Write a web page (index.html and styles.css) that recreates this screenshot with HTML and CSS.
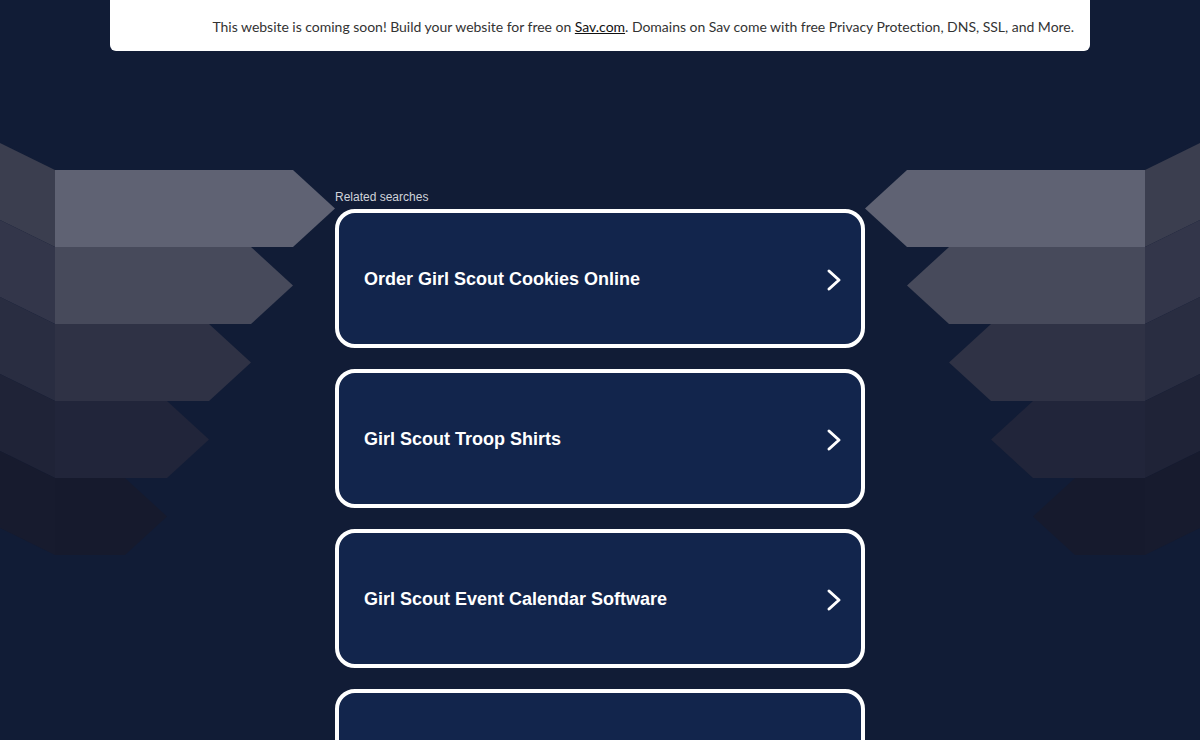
FILE: index.html
```html
<!DOCTYPE html>
<html lang="en">
<head>
  <meta charset="utf-8" />
  <title>Coming soon</title>
  <meta name="viewport" content="width=device-width, initial-scale=1.0">
  <link rel="stylesheet" href="styles.css">
</head>
<body>
  <div class="notice">
    <p>This website is coming soon! Build your website for free on <a href="#">Sav.com</a>. Domains on Sav come with free Privacy Protection, DNS, SSL, and More.</p>
  </div>

  <div class="stage">
    <svg class="decor" width="335" height="430" viewBox="0 0 335 430" aria-hidden="true">
      <polygon fill="#3b3e4f" points="0,0 55,27 55,104 0,77" />
      <polygon fill="#33364a" points="0,77 55,104 55,181 0,154" />
      <polygon fill="#292d41" points="0,154 55,181 55,258 0,231" />
      <polygon fill="#1f2337" points="0,231 55,258 55,335 0,308" />
      <polygon fill="#171b2e" points="0,308 55,335 55,412 0,385" />
      <polygon fill="#5f6273" points="55,27 293,27 335,65.5 293,104 55,104" />
      <polygon fill="#474a5b" points="55,104 251,104 293,142.5 251,181 55,181" />
      <polygon fill="#2f3245" points="55,181 209,181 251,219.5 209,258 55,258" />
      <polygon fill="#21253a" points="55,258 167,258 209,296.5 167,335 55,335" />
      <polygon fill="#161a2d" points="55,335 125,335 167,373.5 125,412 55,412" />
    </svg>

    <div class="results">
      <div class="label">Related searches</div>
      <a class="card" href="#">
        <span>Order Girl Scout Cookies Online</span>
        <svg class="chev" width="16" height="24" viewBox="0 0 16 24"><polyline points="3,3 13,12 3,21" /></svg>
      </a>
      <a class="card" href="#">
        <span>Girl Scout Troop Shirts</span>
        <svg class="chev" width="16" height="24" viewBox="0 0 16 24"><polyline points="3,3 13,12 3,21" /></svg>
      </a>
      <a class="card" href="#">
        <span>Girl Scout Event Calendar Software</span>
        <svg class="chev" width="16" height="24" viewBox="0 0 16 24"><polyline points="3,3 13,12 3,21" /></svg>
      </a>
      <a class="card" href="#">
        <span></span>
        <svg class="chev" width="16" height="24" viewBox="0 0 16 24"><polyline points="3,3 13,12 3,21" /></svg>
      </a>
    </div>

    <svg class="decor flip" width="335" height="430" viewBox="0 0 335 430" aria-hidden="true">
      <polygon fill="#3b3e4f" points="0,0 55,27 55,104 0,77" />
      <polygon fill="#33364a" points="0,77 55,104 55,181 0,154" />
      <polygon fill="#292d41" points="0,154 55,181 55,258 0,231" />
      <polygon fill="#1f2337" points="0,231 55,258 55,335 0,308" />
      <polygon fill="#171b2e" points="0,308 55,335 55,412 0,385" />
      <polygon fill="#5f6273" points="55,27 293,27 335,65.5 293,104 55,104" />
      <polygon fill="#474a5b" points="55,104 251,104 293,142.5 251,181 55,181" />
      <polygon fill="#2f3245" points="55,181 209,181 251,219.5 209,258 55,258" />
      <polygon fill="#21253a" points="55,258 167,258 209,296.5 167,335 55,335" />
      <polygon fill="#161a2d" points="55,335 125,335 167,373.5 125,412 55,412" />
    </svg>
  </div>
</body>
</html>
```

FILE: styles.css
```css
body {
  margin: 0;
  background: #111c36;
  font-family: "Liberation Sans", Arial, sans-serif;
  color: #fff;
}
.notice {
  width: 980px;
  height: 51px;
  margin: 0 auto;
  box-sizing: border-box;
  background: #fff;
  border-radius: 0 0 6px 6px;
  padding: 17px 16px 0;
  text-align: right;
}
.notice p {
  margin: 0;
  font-family: Lato, "Open Sans", sans-serif;
  font-size: 14px;
  line-height: 19px;
  letter-spacing: -0.02px;
  color: #333;
}
.notice a {
  color: #111;
  text-decoration: underline;
}
.stage {
  display: flex;
  margin-top: 92px;
}
.decor {
  flex: 0 0 335px;
  display: block;
}
.flip {
  transform: scaleX(-1);
}
.results {
  flex: 0 0 530px;
  padding-top: 47px;
}
.label {
  font-size: 12px;
  line-height: 14px;
  color: #d0d3da;
  margin-bottom: 5px;
}
.card {
  display: flex;
  align-items: center;
  justify-content: space-between;
  height: 139px;
  box-sizing: border-box;
  margin-bottom: 21px;
  padding: 2px 19px 0 25px;
  border: 4px solid #fff;
  border-radius: 20px;
  background: #12254c;
  color: #fff;
  text-decoration: none;
  font-size: 18px;
  font-weight: bold;
}
.chev polyline {
  fill: none;
  stroke: #fff;
  stroke-width: 3;
  stroke-linecap: round;
  stroke-linejoin: round;
}
```
